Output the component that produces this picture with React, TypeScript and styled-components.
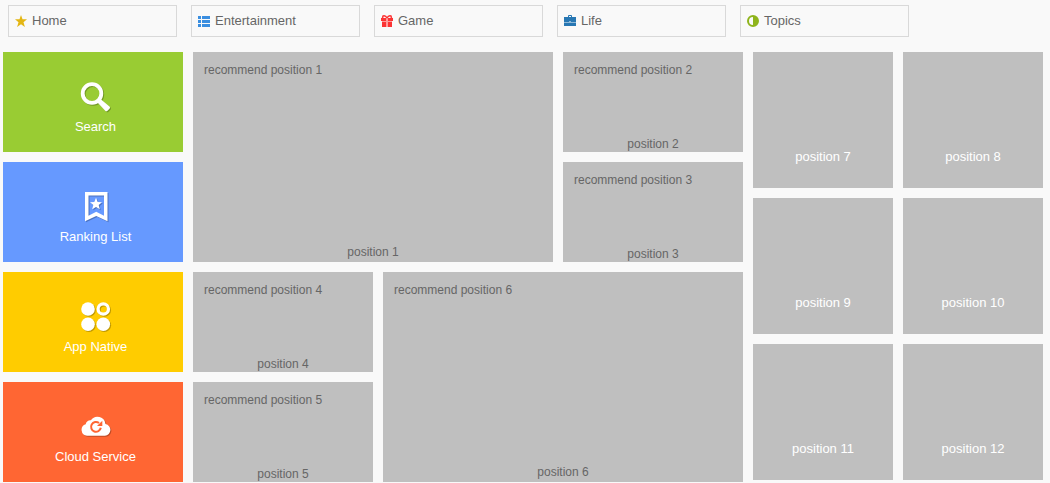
import React from "react";
import styled, { createGlobalStyle } from "styled-components";

const GlobalStyle = createGlobalStyle`
  * { box-sizing: border-box; }
  body {
    margin: 0;
    background: #f9f9f9;
    color: #666;
    font-family: "Liberation Sans", Arial, sans-serif;
    font-size: 13px;
  }
  a { color: inherit; text-decoration: none; }
`;

const Nav = styled.nav`
  display: flex;
  gap: 14px;
  padding: 5px 8px 15px;
`;

const NavItem = styled.a`
  flex: 0 1 169px;
  display: flex;
  align-items: center;
  gap: 5px;
  height: 32px;
  padding: 0 6px;
  border: 1px solid #d9d9d9;
  line-height: 16px;
`;

const Board = styled.main`
  display: grid;
  grid-template-columns: 180fr 180fr 170fr 180fr 290fr;
  grid-auto-rows: minmax(100px, auto);
  gap: 10px;
  padding: 0 7px 0 3px;
`;

const MenuTile = styled.a<{ $color: string }>`
  grid-column: 1;
  display: flex;
  flex-direction: column;
  align-items: center;
  gap: 6px;
  padding: 30px 0 0 5px;
  background: ${(p) => p.$color};
  color: #fff;
  line-height: 16px;
`;

const TileIcon = styled.svg`
  flex: none;
  filter: drop-shadow(1px 1px 0 rgba(0, 0, 0, 0.25));
`;

const FeatureTile = styled.a<{ $column: string; $row: string; $large?: boolean }>`
  grid-column: ${(p) => p.$column};
  grid-row: ${(p) => p.$row};
  display: flex;
  flex-direction: column;
  justify-content: space-between;
  padding: 11px 11px ${(p) => (p.$large ? 3 : 1)}px;
  background: #bfbfbf;
  font-size: 12px;
  line-height: 14px;
`;

const Caption = styled.span`
  text-align: center;
`;

const Side = styled.section`
  grid-column: 5;
  grid-row: 1 / 5;
  align-self: start;
  display: grid;
  grid-template-columns: 1fr 1fr;
  grid-auto-rows: 136px;
  gap: 10px;
`;

const SideTile = styled.a`
  display: flex;
  align-items: flex-end;
  justify-content: center;
  padding-bottom: 23px;
  background: #bfbfbf;
  color: #fff;
  line-height: 16px;
`;

const navItems = [
  {
    label: "Home",
    icon: <path fill="#e3b614" d="M6 0l1.5 4.3H12L8.5 7.200 9.9 12 6 9.200 2.100 12l1.400-4.800L0 4.300h4.500z" />,
  },
  {
    label: "Entertainment",
    icon: <path fill="#3a8ee0" d="M0 1h3v3H0zM4 1h8v3H4zM0 5h3v3H0zM4 5h8v3H4zM0 9h3v3H0zM4 9h8v3H4z" />,
  },
  {
    label: "Game",
    icon: (
      <>
        <path fill="#fb3434" d="M0 3h12v3H0zM1 7h4v5H1zM7 7h4v5H7z" />
        <path fill="#ff9c9c" d="M5 3h2v9H5zM1 6h10v1H1z" />
        <path fill="none" stroke="#fb3434" strokeWidth="1.5" d="M6 3C5 1 3.500.5 2 1l-.5 2M6 3c1-2 2.500-2.500 4-2l.5 2" />
      </>
    ),
  },
  {
    label: "Life",
    icon: (
      <>
        <path fill="#2777b3" d="M0 2h12v5H0zM0 8h12v3H0z" />
        <path fill="#8fb9d8" d="M0 7h12v1H0zM5 6h2v1H5z" />
        <path fill="none" stroke="#2777b3" d="M4.500 2V.5h3V2" />
      </>
    ),
  },
  {
    label: "Topics",
    icon: (
      <>
        <circle cx="6" cy="6" r="5" fill="none" stroke="#8fb41c" strokeWidth="2" />
        <path fill="#8fb41c" d="M6 1a5 5 0 0 1 0 10z" />
      </>
    ),
  },
];

const menuTiles = [
  {
    label: "Search",
    color: "#99cc33",
    icon: (
      <>
        <circle cx="12" cy="11.5" r="9.3" fill="none" stroke="#fff" strokeWidth="3.8" />
        <path fill="#fff" d="M17.500 20.500l3-3.500 9 7.500q1 1 0 2.200l-2 2q-1.200 1-2.300 0z" />
      </>
    ),
  },
  {
    label: "Ranking List",
    color: "#6699ff",
    icon: (
      <>
        <path fill="#fff" fillRule="evenodd" d="M5 0h22.500v29.300L16.250 24 5 29.300zM8.500 3.500v20.200l7.750-4L24 23.700V3.500z" />
        <path fill="#fff" d="M16 5.800l1.700 4.100 4.300.3-3.300 2.800 1.100 4.300-3.800-2.400-3.800 2.400 1.100-4.300L10 10.200l4.300-.3z" />
      </>
    ),
  },
  {
    label: "App Native",
    color: "#ffcc00",
    icon: (
      <>
        <circle cx="8" cy="7" r="6.8" fill="#fff" />
        <circle cx="23.3" cy="7" r="5.2" fill="none" stroke="#fff" strokeWidth="3.2" />
        <circle cx="8" cy="22.3" r="6.8" fill="#fff" />
        <circle cx="23.3" cy="22.3" r="6.8" fill="#fff" />
      </>
    ),
  },
  {
    label: "Cloud Service",
    color: "#ff6633",
    icon: (
      <>
        <path fill="#fff" d="M7 23.700a5.900 5.900 0 0 1-1.300-11.500 4.600 4.600 0 0 1 5.200-3.900 8 8 0 0 1 14.600 3.700 5.900 5.900 0 0 1-.6 11.700z" />
        <path fill="none" stroke="#ff6633" strokeWidth="2" d="M19 11a4.900 4.900 0 1 0 1.800 4.800" />
        <path fill="#ff6633" d="M22.300 8.700v5.300H17z" />
      </>
    ),
  },
];

const features = [
  { id: 1, column: "2 / 4", row: "1 / 3", large: true },
  { id: 2, column: "4", row: "1" },
  { id: 3, column: "4", row: "2" },
  { id: 4, column: "2", row: "3" },
  { id: 5, column: "2", row: "4" },
  { id: 6, column: "3 / 5", row: "3 / 5", large: true },
];

const sidePositions = [7, 8, 9, 10, 11, 12];

export default function App() {
  return (
    <>
      <GlobalStyle />
      <Nav>
        {navItems.map((item) => (
          <NavItem href="#" key={item.label}>
            <svg width="12" height="12" viewBox="0 0 12 12" aria-hidden="true">
              {item.icon}
            </svg>
            <span>{item.label}</span>
          </NavItem>
        ))}
      </Nav>
      <Board>
        {menuTiles.map((tile) => (
          <MenuTile href="#" key={tile.label} $color={tile.color}>
            <TileIcon width="31" height="31" viewBox="0 0 31 31" aria-hidden="true">
              {tile.icon}
            </TileIcon>
            <span>{tile.label}</span>
          </MenuTile>
        ))}
        {features.map((f) => (
          <FeatureTile href="#" key={f.id} $column={f.column} $row={f.row} $large={f.large}>
            <span>recommend position {f.id}</span>
            <Caption>position {f.id}</Caption>
          </FeatureTile>
        ))}
        <Side>
          {sidePositions.map((n) => (
            <SideTile href="#" key={n}>
              position {n}
            </SideTile>
          ))}
        </Side>
      </Board>
    </>
  );
}
